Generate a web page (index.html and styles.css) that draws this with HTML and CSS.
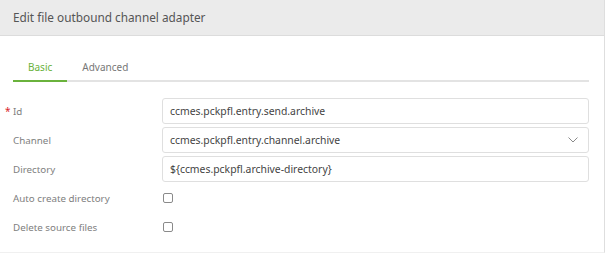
FILE: index.html
```html
<!DOCTYPE html>
<html>
<head>
	<meta charset="utf-8">
	<title>Edit file outbound channel adapter</title>
	<link rel="stylesheet" href="styles.css">
</head>
<body>
	<div class="dialog">
		<!--title-->
		<div class="dialog-head">Edit file outbound channel adapter</div>

		<div class="dialog-body">
			<!--tabs-->
			<ul class="tabs">
				<li class="current">Basic</li>
				<li>Advanced</li>
			</ul>

			<!--form-->
			<div class="form">
				<div class="row">
					<label class="label"><span class="req">*</span>Id</label>
					<div class="field">ccmes.pckpfl.entry.send.archive</div>
				</div>
				<div class="row">
					<label class="label">Channel</label>
					<div class="field select">
						<span>ccmes.pckpfl.entry.channel.archive</span>
						<svg class="chevron" width="10" height="6" viewBox="0 0 10 6"><path d="M0.5 0.5 L5 5 L9.5 0.5" fill="none" stroke="#8a8a8a" stroke-width="1"/></svg>
					</div>
				</div>
				<div class="row">
					<label class="label">Directory</label>
					<div class="field">${ccmes.pckpfl.archive-directory}</div>
				</div>
				<div class="row">
					<label class="label">Auto create directory</label>
					<div class="check"><span class="box"></span></div>
				</div>
				<div class="row">
					<label class="label">Delete source files</label>
					<div class="check"><span class="box"></span></div>
				</div>
			</div>
		</div>
	</div>
</body>
</html>
```

FILE: styles.css
```css
*{
    margin: 0;
    padding: 0;
    list-style: none;
    box-sizing: border-box;
}

html, body{
    width: 100%;
    height: 100%;
    background-color: #fff;
    font-family: "Noto Sans", "DejaVu Sans", sans-serif;
}

.dialog{
    width: 605px;
    height: 253px;
    border-right: 1px solid #dedede;
    border-bottom: 1px solid #f0f0f0;
}

.dialog-head{
    height: 36px;
    line-height: 35px;
    padding-left: 13px;
    background-color: #ebebeb;
    border-bottom: 1px solid #dcdcdc;
    color: #555;
    font-size: 11.8px;
}

.dialog-body{
    padding: 0 15px 0 13px;
}

.tabs{
    display: flex;
    margin-top: 23px;
    border-bottom: 2px solid #e3e3e3;
}

.tabs li{
    padding: 0 15px 5px;
    line-height: 16px;
    font-size: 10px;
    color: #777;
    margin-bottom: -2px;
    border-bottom: 2px solid transparent;
}

.tabs li.current{
    color: #6ab23c;
    border-bottom-color: #6ab23c;
}

.form{
    display: flex;
    flex-direction: column;
    gap: 3px;
    margin-top: 16px;
}

.row{
    display: grid;
    grid-template-columns: 149px 1fr;
    align-items: center;
    height: 26px;
}

.label{
    font-size: 9.8px;
    color: #808080;
}

.req{
    display: inline-block;
    width: 8px;
    margin-left: -8px;
    color: #d9262c;
    font-size: 10px;
}

.field{
    height: 26px;
    line-height: 24px;
    padding-left: 7px;
    border: 1px solid #dfdfdf;
    border-radius: 3px;
    font-size: 10.4px;
    color: #444;
}

.select{
    display: flex;
    justify-content: space-between;
    align-items: center;
    padding-right: 10px;
}

.check{
    display: flex;
    align-items: center;
}

.box{
    width: 10px;
    height: 10px;
    margin-left: 1px;
    border: 1px solid #8a8a8a;
    border-radius: 2px;
}
```
